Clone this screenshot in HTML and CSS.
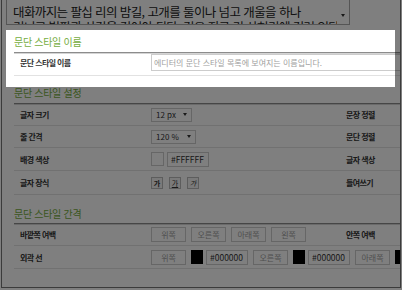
FILE: index.html
```html
<!DOCTYPE html>
<html lang="ko">
<head>
  <meta charset="UTF-8">
  <meta name="viewport" content="width=device-width, initial-scale=1.0">
  <title>문단 스타일</title>
  <link rel="stylesheet" href="styles.css">
</head>
<body>
  <div class="frame">
    <!-- preview of the paragraph, scrolled so only the first line shows -->
    <div class="editor">
      <div class="editor-text">대화까지는 팔십 리의 밤길, 고개를 둘이나 넘고 개울을 하나<br>건너고 벌판과 산길을 걸어야 된다. 길은 지금 긴 산허리에 걸려 있다.</div>
      <div class="editor-scroll"><span class="arrow"></span></div>
    </div>

    <div class="section">
      <h3 class="section-title">문단 스타일 이름</h3>
      <div class="row row-name">
        <span class="label">문단 스타일 이름</span>
        <input class="name-input" type="text" placeholder="에디터의 문단 스타일 목록에 보여지는 이름입니다.">
      </div>
    </div>

    <div class="section">
      <h3 class="section-title">문단 스타일 설정</h3>
      <div class="row">
        <span class="label">글자 크기</span>
        <div class="value">
          <div class="select select-size">12 px <span class="arrow"></span></div>
        </div>
        <span class="label side">문장 정렬</span>
      </div>
      <div class="row">
        <span class="label">줄 간격</span>
        <div class="value">
          <div class="select select-height">120 % <span class="arrow"></span></div>
        </div>
        <span class="label side">문단 정렬</span>
      </div>
      <div class="row row-mid">
        <span class="label">배경 색상</span>
        <div class="value">
          <div class="color-pair">
            <span class="swatch"></span>
            <input class="hex-input" type="text" value="#FFFFFF">
          </div>
        </div>
        <span class="label side">글자 색상</span>
      </div>
      <div class="row row-tall">
        <span class="label">글자 장식</span>
        <div class="value buttons">
          <button class="deco bold">가</button>
          <button class="deco underline">가</button>
          <button class="deco italic">가</button>
        </div>
        <span class="label side">들여쓰기</span>
      </div>
    </div>

    <div class="section section-spacing">
      <h3 class="section-title">문단 스타일 간격</h3>
      <div class="row">
        <span class="label">바깥쪽 여백</span>
        <div class="value boxes">
          <input class="box-input" type="text" placeholder="위쪽">
          <input class="box-input" type="text" placeholder="오른쪽">
          <input class="box-input" type="text" placeholder="아래쪽">
          <input class="box-input" type="text" placeholder="왼쪽">
        </div>
        <span class="label side">안쪽 여백</span>
      </div>
      <div class="row row-mid">
        <span class="label">외곽 선</span>
        <div class="value value-wide boxes">
          <input class="box-input" type="text" placeholder="위쪽">
          <div class="color-pair">
            <span class="swatch black"></span>
            <input class="hex-input" type="text" value="#000000">
          </div>
          <input class="box-input" type="text" placeholder="오른쪽">
          <div class="color-pair">
            <span class="swatch black"></span>
            <input class="hex-input" type="text" value="#000000">
          </div>
          <input class="box-input" type="text" placeholder="아래쪽">
          <div class="color-pair">
            <span class="swatch black"></span>
            <input class="hex-input" type="text" value="#000000">
          </div>
        </div>
      </div>
    </div>
  </div>

  <!-- guide spotlight over the name section -->
  <div class="spotlight"></div>
</body>
</html>
```

FILE: styles.css
```css
html, body {
  margin: 0;
  padding: 0;
  overflow: hidden;
  background: #fff;
}
body {
  font-family: "Noto Sans CJK KR", "Noto Sans", sans-serif;
  color: #333;
}
.frame {
  width: 400px;
  height: 288px;
  margin-left: 1px;
  box-sizing: border-box;
  border: 1px solid #777;
  border-top: 0;
  overflow: hidden;
}
.editor {
  display: flex;
  width: 344px;
  height: 26px;
  margin: -1px 0 0 4px;
  box-sizing: border-box;
  border: 1px solid #aaa;
  overflow: hidden;
}
.editor-text {
  flex: 1;
  padding: 4px 0 0 6px;
  font-size: 12.5px;
  line-height: 15px;
  letter-spacing: -0.6px;
  white-space: nowrap;
  overflow: hidden;
  color: #222;
}
.editor-scroll {
  width: 12px;
  display: flex;
  align-items: flex-end;
  justify-content: center;
  padding-bottom: 7px;
  box-sizing: border-box;
}
.arrow {
  display: inline-block;
  width: 0;
  height: 0;
  border-left: 2.5px solid transparent;
  border-right: 2.5px solid transparent;
  border-top: 3px solid #333;
}
.section {
  padding-left: 12px;
}
.section-title {
  margin: 0;
  padding: 11px 0 4px;
  font-size: 10px;
  line-height: 12px;
  font-weight: normal;
  letter-spacing: -0.3px;
  color: #76ad3f;
  border-bottom: 1px solid #8c8c8c;
  box-shadow: 0 1px 0 #d4d4d4;
}
.section-spacing .section-title {
  padding: 13px 0 3px;
}
.row {
  display: flex;
  align-items: center;
  min-height: 21px;
  padding-left: 6px;
  border-bottom: 1px solid #e2e2e2;
}
.row-mid {
  min-height: 22px;
}
.row-tall {
  min-height: 23px;
}
.row-name {
  align-items: flex-start;
  padding-top: 1px;
}
.row-name .label {
  line-height: 17px;
}
.label {
  width: 131px;
  flex: none;
  font-size: 8px;
  font-weight: bold;
  letter-spacing: -0.6px;
  color: #333;
}
.label.side {
  width: auto;
}
.value {
  width: 195px;
  flex: none;
  display: flex;
  align-items: center;
}
.value-wide {
  width: auto;
}
input {
  font-family: inherit;
  margin: 0;
  box-sizing: border-box;
  border: 1px solid #ccc;
  background: #fff;
  outline: none;
}
input::placeholder {
  color: #a0a0a0;
}
.name-input {
  width: 260px;
  height: 17px;
  padding: 0 2px;
  font-size: 8px;
  flex: none;
}
.select {
  display: flex;
  align-items: center;
  justify-content: space-between;
  height: 14px;
  padding: 0 4px;
  box-sizing: border-box;
  border: 1px solid #ccc;
  font-size: 8px;
  color: #333;
}
.select-size {
  width: 41px;
}
.select-height {
  width: 45px;
}
.color-pair {
  display: flex;
  align-items: center;
  gap: 3px;
  flex: none;
}
.swatch {
  width: 13px;
  height: 14px;
  box-sizing: border-box;
  border: 1px solid #ccc;
  background: #fff;
}
.swatch.black {
  width: 12px;
  border-color: #000;
  background: #000;
}
.hex-input {
  width: 42px;
  height: 15px;
  padding: 0 3px;
  font-size: 8.5px;
  color: #333;
}
.buttons {
  gap: 6px;
}
.deco {
  width: 12px;
  height: 12px;
  padding: 0;
  margin: 0;
  border: 1px solid #bbb;
  background: #f4f4f4;
  font-family: inherit;
  font-size: 7px;
  line-height: 10px;
  color: #333;
}
.deco.bold {
  font-weight: bold;
}
.deco.underline {
  text-decoration: underline;
}
.deco.italic {
  font-style: italic;
}
.boxes {
  gap: 5px;
}
.box-input {
  width: 35px;
  height: 15px;
  padding: 0;
  font-size: 8px;
  text-align: center;
  flex: none;
}
.spotlight {
  position: absolute;
  left: 6px;
  top: 30px;
  width: 389px;
  height: 57px;
  box-shadow: 0 0 0 1000px rgba(0, 0, 0, 0.5);
  pointer-events: none;
}
```
